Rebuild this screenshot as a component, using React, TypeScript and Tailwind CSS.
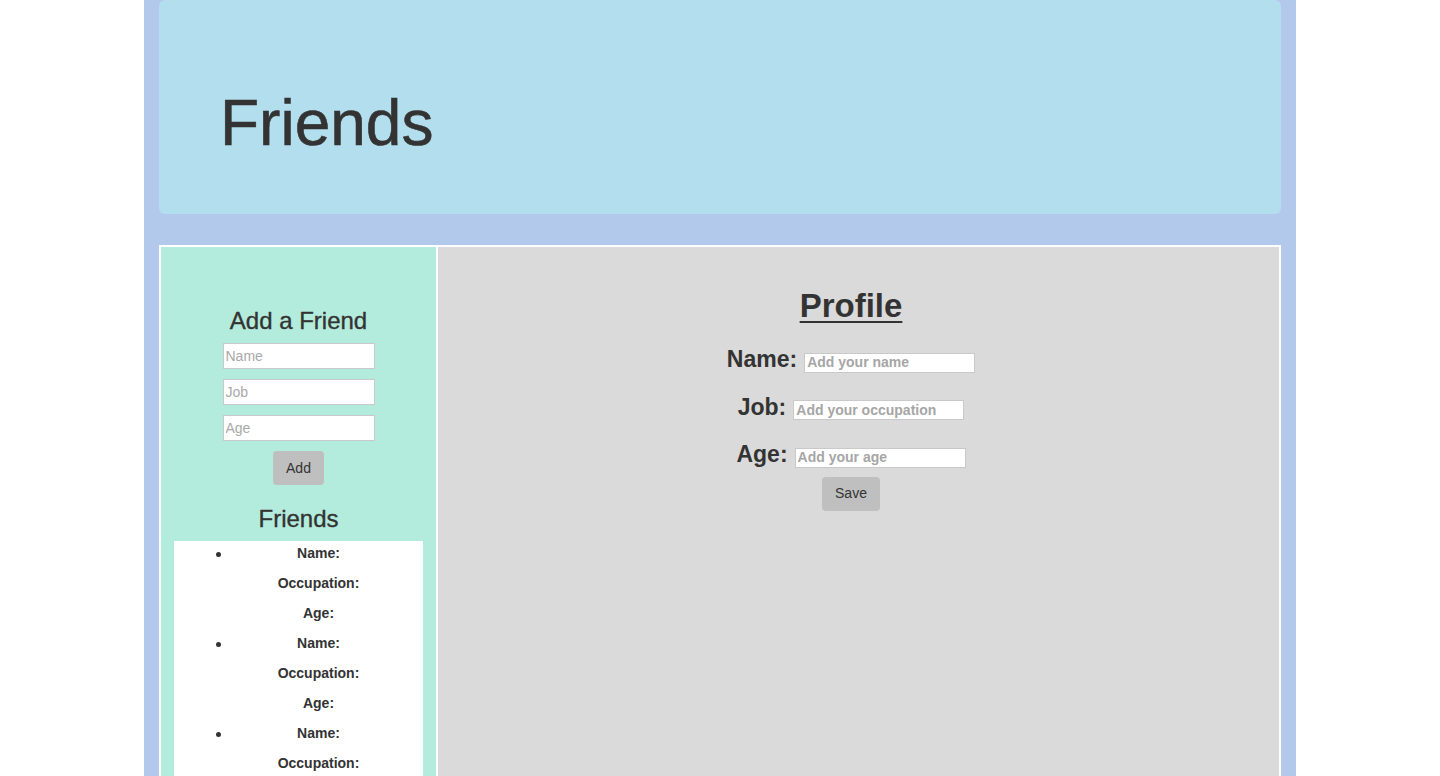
import React from "react";

const friends = [0, 1, 2];

function FriendItem() {
  return (
    <li className="relative">
      <span className="absolute left-[2px] top-[11px] h-[5px] w-[5px] rounded-full bg-[#333]" />
      <p className="mb-[5px] text-[14px] leading-[25px] font-bold">Name:</p>
      <p className="mb-[5px] text-[14px] leading-[25px] font-bold">Occupation:</p>
      <p className="mb-[5px] text-[14px] leading-[25px] font-bold">Age:</p>
    </li>
  );
}

function ProfileRow({ label, placeholder, first }: { label: string; placeholder: string; first?: boolean }) {
  return (
    <div className={`flex items-baseline justify-center gap-[7px] ${first ? "" : "mt-[21px]"}`}>
      <label className="text-[23px] leading-[26px] font-bold">{label}</label>
      <input
        className="h-[20px] w-[171px] border border-[#c9c9c9] bg-white px-[2px] text-[14px] font-bold placeholder:text-[#a6a6a6] outline-none"
        placeholder={placeholder}
      />
    </div>
  );
}

export default function App() {
  return (
    <div className="min-h-screen w-full bg-white font-['Liberation_Sans',Arial,sans-serif] text-[#333]">
      <div className="mx-auto min-h-screen w-[1152px] bg-[#b3c9eb] px-[15px]">
        {/* header */}
        <div className="mb-[31px] h-[214px] rounded-[6px] bg-[#b3deed] pl-[61px] pt-[88px]">
          <h1 className="text-[64px] leading-[70px] [-webkit-text-stroke:0.6px_#333]">Friends</h1>
        </div>

        <div className="flex border-2 border-white">
          {/* sidebar */}
          <div className="w-[277px] shrink-0 border-r-2 border-white bg-[#b3ecdc] px-[13px] pt-[61px]">
            <h3 className="mb-[9px] text-center text-[24px] leading-[26px] [-webkit-text-stroke:0.35px_#333]">
              Add a Friend
            </h3>
            <div className="flex flex-col items-center gap-[10px]">
              <input
                className="h-[26px] w-[152px] border border-[#c9c9c9] bg-white px-[2px] text-[14px] placeholder:text-[#a9a9a9] outline-none"
                placeholder="Name"
              />
              <input
                className="h-[26px] w-[152px] border border-[#c9c9c9] bg-white px-[2px] text-[14px] placeholder:text-[#a9a9a9] outline-none"
                placeholder="Job"
              />
              <input
                className="h-[26px] w-[152px] border border-[#c9c9c9] bg-white px-[2px] text-[14px] placeholder:text-[#a9a9a9] outline-none"
                placeholder="Age"
              />
              <button className="h-[34px] rounded-[4px] bg-[#bfbfbf] px-[13px] text-[14px]">Add</button>
            </div>
            <h3 className="mt-[21px] mb-[9px] text-center text-[24px] leading-[26px] [-webkit-text-stroke:0.35px_#333]">
              Friends
            </h3>
            <ul className="bg-white pl-10 text-center">
              {friends.map((f) => (
                <FriendItem key={f} />
              ))}
            </ul>
          </div>

          {/* profile */}
          <div className="flex-1 bg-[#dadada] pr-[15px] pt-[41px]">
            <h2 className="mb-[22px] text-center text-[33px] leading-[36px] font-bold underline decoration-2 underline-offset-[4px]">
              Profile
            </h2>
            <ProfileRow label="Name:" placeholder="Add your name" first />
            <ProfileRow label="Job:" placeholder="Add your occupation" />
            <ProfileRow label="Age:" placeholder="Add your age" />
            <div className="mt-[9px] flex justify-center">
              <button className="h-[34px] rounded-[4px] bg-[#bfbfbf] px-[13px] text-[14px]">Save</button>
            </div>
          </div>
        </div>
      </div>
    </div>
  );
}
